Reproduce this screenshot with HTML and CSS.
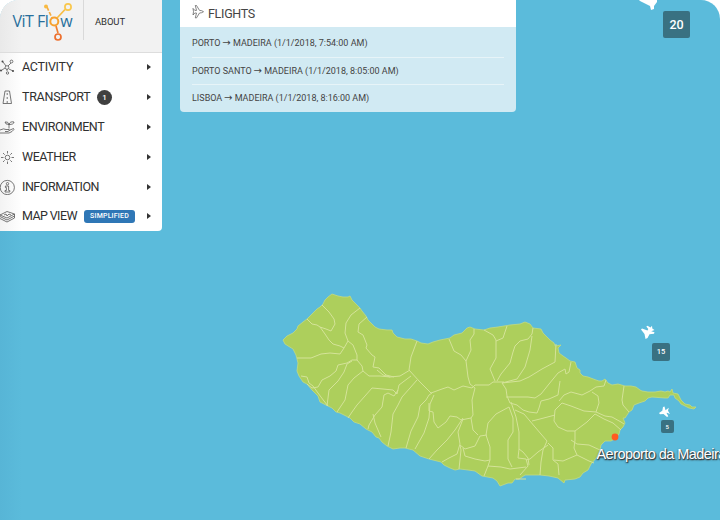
FILE: index.html
```
<!DOCTYPE html>
<html lang="en">
<head>
<meta charset="utf-8">
<title>ViT Flow</title>
<link rel="stylesheet" href="styles.css">
</head>
<body>
<main class="app">
  <svg class="map" viewBox="0 0 720 520" aria-label="Map of Madeira">
    <path class="island" d="M283 340L287 336L293 333L297 329L298 326L303 322L307 319L312 314L317 309L320 307L323 304L325 300L328 297L332 294L338 296L343 297L348 297L350 296L352 300L357 305L360 308L362 311L366 316L368 320L371 323L375 327L379 329L387 330L392 330L393 333L397 337L401 338L405 339L411 339L417 341L421 343L428 344L433 342L440 340L450 338L454 335L462 333L467 328L470 327L475 329L484 330L490 328L498 327L510 325L520 324L525 322L530 324L533 328L541 329L543 333L546 336L550 340L554 343L555 346L561 345L558 348L559 353L563 356L566 358L570 361L575 362L577 368L580 370L580 373L583 376L588 377L596 380L599 381L602 381L605 379L608 383L612 385L618 384L625 386L631 386L636 387L640 390L642 391L648 392L655 392L661 391L665 392L668 391L670 392L672 389L673 393L678 394L681 400L685 404L690 405L692 407L696 407L694 409L689 408L685 406L681 404L679 401L675 398L674 395L670 395L668 398L665 398L652 397L648 398L645 401L639 403L634 405L632 410L629 412L625 418L623 418L625 423L623 427L620 430L619 434L616 438L611 441L605 441L601 445L600 450L597 457L591 464L588 470L583 473L580 477L575 479L565 480L564 483L558 478L549 476L540 475L525 475L519 479L515 479L512 483L508 483L500 486L497 481L493 478L482 476L475 471L468 470L460 469L455 470L450 468L444 465L441 462L429 459L420 456L413 450L405 448L400 448L393 449L387 446L382 442L379 438L376 437L372 432L366 429L360 424L354 422L350 418L340 413L336 412L332 408L328 406L320 402L318 396L315 393L312 390L307 384L303 382L299 376L297 371L298 363L296 355L293 349L285 344Z"/>
    <g class="borders">
      <path d="M322 305L329 312L334 319L335 324L331 331L326 329L320 327L317 325L312 324L307 319M320 327L325 334L329 340L333 344L340 346L344 348L348 341M297 358L311 358L321 354L330 353L340 354L344 348M360 308L351 315L346 323L345 333L348 341L353 345L357 355L357 360L352 360L347 363L338 365L336 371L330 376L322 380L318 387L312 388L307 384"/>
      <path d="M367 317L359 324L358 332L363 335L367 345L366 348L372 355L375 357L374 362L373 367L379 368L386 375L394 377M357 360L362 366L363 371L354 378L348 385L345 400L337 412M352 361L347 364L344 372L338 381L329 390L327 406M363 371L369 376L380 376L390 377L400 376L410 370"/>
      <path d="M301 376L307 377L309 383L313 386L318 393L324 401L328 406M348 418L352 412L357 405L365 396L372 388L383 389L393 390L397 394L399 385L411 376M368 429L369 425L375 415L382 407L384 395L388 393L394 396L398 390M373 414L375 423L381 437M388 446L391 432L393 414L398 405L402 397L410 388L417 380M406 448L411 431L418 417L420 406L426 400L429 395L432 393M377 370L383 375L390 377"/>
      <path d="M417 341L411 357L409 370L420 382L431 393L442 389L448 387L454 390L463 386L472 388L475 385L489 385L493 382L504 382M415 449L424 433L429 418L430 404L434 395"/>
      <path d="M449 339L454 351L461 355L466 361L468 377L470 384L475 388L472 400L473 415L471 418M474 329L474 334L470 340L471 350L466 361M484 330L493 335L496 340L496 358L490 369L495 381M507 326L503 338L496 341M497 381L501 374L510 363L513 352L515 346L520 341L528 339L532 334L533 328M532 336L530 350L525 367L517 379L502 383M556 344L555 362L542 369L529 377L520 381L502 383M429 403L429 411L433 412L434 422L438 428L446 422L450 416L457 417L461 420L471 418M429 459L437 450L447 440L455 430L463 418M442 462L449 458L457 454L460 444L458 432L463 419M459 469L461 450L460 445L465 449L475 446L480 436L487 435M471 418L473 430L478 435"/>
      <path d="M463 448L465 456L475 459L485 461L490 460L490 447L486 435L488 423L496 414L509 407L513 418L513 432L508 440L508 459L512 467M490 460L488 466L484 476M488 466L501 467L510 469L518 468L526 467M511 402L516 417L519 432L519 449L518 458L526 459L528 466L520 475M510 403L507 396L506 389L502 383M560 381L559 388L558 395L549 399L541 401L539 408L537 413L529 412L523 410L517 405L510 403M532 421L540 419L555 415"/>
      <path d="M506 397L521 397L528 397L535 398L541 394L549 384L558 373L565 369L566 374L569 372L571 362M559 401L564 395L571 392L582 395L590 391L596 387L604 386L606 380M592 392L598 396L599 403L596 412L584 411L571 406L562 403L555 410L554 421L558 427L567 431L575 431L587 422L595 414L604 419L613 423L621 430M515 410L524 414L535 427L547 441L543 450L541 462L540 475M548 445L538 452L530 459L526 460M548 443L553 448L553 460L558 464L559 475M554 460L563 461L577 455L589 461L594 463M624 386L622 400L623 405L629 412M596 412L605 416L612 417L621 422L624 424M571 440L577 444L589 445L600 450M575 431L575 440L574 448L577 455M519 449L523 452L528 458L529 465M516 479H526"/>
    </g>
    <g class="planes">
      <path d="M645.5 339L644.5 334L641 329.5L642 328.5L647.5 330.5L648.3 329L646.3 326.5L647.5 325.7L650.5 327.5L652 325.8L652.3 328.5L654.5 330L651.2 331.2L654.5 332.3L654 333.8L649.5 334.2L647.5 338Z"/>
      <path d="M659 413L662.3 410.7L663 407L664.5 406.5L665.5 410.2L668.8 407.8L668 410.8L670 414L667 412.8L666.5 413L668.3 416.3L667 417L663.5 414L660 414.3Z"/>
      <path d="M638-1L640 1L646 4L650 6L651 10L654 9V6L657 2V-1Z"/>
    </g>
    <circle class="airport" cx="615" cy="437" r="3.4"/>
  </svg>
  <span class="count count-large">20</span>
  <span class="count count-medium">15</span>
  <span class="count count-small">5</span>
  <span class="airport-label">Aeroporto da Madeira</span>

  <div class="panels">
    <aside class="sidebar">
      <header class="brand">
        <div class="logo">
          <span class="logo-text">ViT Fl<i></i>w</span>
          <svg class="logo-mark" viewBox="0 0 30 42">
            <g fill="none" stroke-width="1.7">
              <path stroke="#f8bd42" d="M23 9.5L15 18"/><path stroke="#f6ad42" stroke-dasharray="4 1.5" d="M5 7L10 18"/><path stroke="#f07e2f" d="M14 26L16 33"/>
              <circle cx="26" cy="7" r="3.1" stroke="#f9c74c"/><circle cx="12.3" cy="21.5" r="4" stroke="#f6a02e" stroke-width="2"/><circle cx="16" cy="37" r="3" stroke="#ed702e"/>
            </g><circle cx="4" cy="6.5" r="2" fill="#f8ba42"/>
          </svg>
        </div>
        <a class="about">ABOUT</a>
      </header>
      <nav class="menu">
        <div class="item"><svg class="icon" viewBox="0 0 16 16"><circle cx="7" cy="8.5" r="1.8"/><circle cx="11.5" cy="2.5" r="1.4"/><circle cx="7.5" cy="14" r="1.2"/><path d="M8 7L11 4M5 9L2 11M6 7L3 3M9 10L13 12M7 10V12"/><g class="solid"><circle cx="2.5" cy="2.5" r="1"/><circle cx="1" cy="11.5" r="1"/><circle cx="13" cy="12" r="1"/></g></svg><span class="name activity">ACTIVITY</span><i class="caret"></i></div>
        <div class="item"><svg class="icon" viewBox="0 0 16 16"><path d="M5 2L3 14.5H11.5L9.5 2ZM7.2 4V6M7.2 8V10M7.2 12V14"/></svg><span class="name transport">TRANSPORT</span><b class="badge">1</b><i class="caret"></i></div>
        <div class="item"><svg class="icon" viewBox="0 0 16 16"><path d="M9 9.5V5M9 5.5Q5 5.5 5 3Q8 2 9 5.5Q10 2 14 3Q14 5.5 9 5.5M0 11Q4 9 6 10.5H9Q10 11.5 8 12.5H5M9 11.5L13.5 9.5Q15 10 12 12.5L9 14H0"/></svg><span class="name environment">ENVIRONMENT</span><i class="caret"></i></div>
        <div class="item"><svg class="icon" viewBox="0 0 16 16"><circle cx="7.5" cy="8.5" r="2.3"/><path d="M7.5 2V4.5M7.5 12.5V15M1 8.5H3.5M11.5 8.5H14M3 4L4.7 5.7M10.3 11.3L12 13M3 13L4.7 11.3M10.3 5.7L12 4"/></svg><span class="name weather">WEATHER</span><i class="caret"></i></div>
        <div class="item"><svg class="icon" viewBox="0 0 16 16"><circle cx="7.3" cy="8.5" r="7.1"/><circle cx="7.5" cy="4.7" r="1.2"/><path d="M5.4 7H8.6V11.5H9.8V13H5V11.5H6.4V8.5H5.4Z"/></svg><span class="name information">INFORMATION</span><i class="caret"></i></div>
        <div class="item"><svg class="icon" viewBox="0 0 16 16"><path d="M0 7L7 3.5L14.5 6L7 10ZM0 8.5L7 12L14.5 8M0 10.5L7 14L14.5 10M14.5 6V10M4 7L6 6L7 8L9 6L11 7"/></svg><span class="name mapview">MAP VIEW</span><b class="mode">SIMPLIFIED</b><i class="caret"></i></div>
      </nav>
    </aside>
    <section class="flights">
      <h1 class="title"><svg class="plane-icon" viewBox="0 0 12 14"><path d="M11.5 6.7Q10 5.4 7.5 5.4L4.5 .5H3.3L4.5 5.4H2.8L1 3.4L1.5 6.7L1 10L2.8 8H4.5L3.3 12.9H4.5L7.5 8Q10 8 11.5 6.7Z"/></svg><span class="heading">FLIGHTS</span></h1>
      <ul class="list">
        <li>PORTO <span class="arrow">→</span> MADEIRA (1/1/2018, 7:54:00 AM)</li>
        <li>PORTO SANTO <span class="arrow">→</span> MADEIRA (1/1/2018, 8:05:00 AM)</li>
        <li>LISBOA <span class="arrow">→</span> MADEIRA (1/1/2018, 8:16:00 AM)</li>
      </ul>
    </section>
  </div>
</main>
</body>
</html>
```
FILE: styles.css
```
* { box-sizing: border-box; }
body { margin: 0; background: #fff; font-family: Roboto, "Liberation Sans", sans-serif; color: #303030; }
.app { position: relative; width: 720px; height: 520px; overflow: hidden; border-radius: 19px 19px 0 0; background: linear-gradient(90deg, #57b5d6 0, #5bbbdb 22px); }
.map { position: absolute; inset: 0; width: 720px; height: 520px; }
.island { fill: #adcf5c; stroke: #c3da80; stroke-width: .8; }
.borders { fill: none; stroke: #d4e398; stroke-width: 1; stroke-linejoin: round; }
.planes { fill: #fff; }
.airport { fill: #ff5b20; }
.panels { position: relative; display: flex; align-items: flex-start; gap: 18.5px; }
.sidebar { width: 161.5px; height: 231px; background: linear-gradient(90deg, #f3f3f3 0, #fff 22px); border-radius: 0 0 4px 0; overflow: hidden; }
.brand { display: flex; height: 53px; background: linear-gradient(90deg, #e9e9e9 0, #f2f2f2 22px); border-bottom: 1px solid #ddd; }
.logo { position: relative; width: 84px; height: 40px; border-right: 1px solid #d9d9d9; padding: 11.5px 0 0 12.5px; }
.logo-text { display: flex; white-space: pre; font: 500 16px/19px "Open Sans", sans-serif; color: #286f9c; letter-spacing: -.5px; }
.logo-text i { width: 12px; }
.logo-mark { position: absolute; left: 42px; top: 0; width: 30px; height: 42px; }
.about { font-size: 9.5px; line-height: 12px; padding: 15.5px 0 0 11px; letter-spacing: -.1px; }
.menu { display: grid; grid-auto-rows: 29.8px; margin-top: -.5px; }
.item { display: flex; align-items: center; }
.icon { width: 16px; height: 16px; flex: none; fill: none; stroke: #555; stroke-width: .8; }
.solid { fill: #444; stroke: none; }
.name { font-size: 12.5px; line-height: 16px; margin-left: 6px; white-space: nowrap; }
.activity { width: 52px; letter-spacing: -.25px; }
.transport { width: 68.5px; letter-spacing: -.27px; }
.environment { letter-spacing: -.42px; }
.weather { letter-spacing: -.42px; }
.information { letter-spacing: -.48px; }
.mapview { width: 55px; letter-spacing: -.6px; }
.caret { margin-left: auto; margin-right: 10.5px; border-left: 4px solid #333; border-top: 3px solid transparent; border-bottom: 3px solid transparent; }
.badge { width: 15px; height: 15px; margin-left: 6.5px; border-radius: 50%; background: #404040; color: #fff; font-size: 8px; line-height: 15px; font-weight: 500; text-align: center; }
.mode { width: 51px; height: 13px; margin-left: 7px; border-radius: 3px; background: #2f77b6; color: #fff; font-size: 7px; line-height: 13px; font-weight: 500; letter-spacing: .2px; text-align: center; }
.flights { width: 335.5px; height: 112px; background: #d1eaf3; border-radius: 0 0 4px 4px; overflow: hidden; }
.title { display: flex; height: 26.5px; margin: 0; padding: 5px 12px 0; background: #fff; font-size: 12.5px; line-height: 17px; font-weight: 400; color: #444; }
.heading { letter-spacing: -.3px; }
.plane-icon { width: 12px; height: 14px; margin-right: 4px; fill: none; stroke: #555; stroke-width: .7; }
.list { list-style: none; margin: 0; padding: 3.5px 12px; }
.list li { height: 27.5px; border-bottom: 1px solid #e7f4f8; font-size: 9px; line-height: 27px; color: #444; white-space: nowrap; }
.list li:last-child { border: 0; }
.arrow { display: inline-block; width: 8px; font: 10px/10px "DejaVu Sans", sans-serif; text-indent: -.5px; }
.count { position: absolute; display: grid; place-items: center; border-radius: 2px; background: #397182; color: #fff; font-weight: 500; }
.count-large { left: 663px; top: 10.5px; width: 27px; height: 27px; font-size: 12.5px; }
.count-medium { left: 652px; top: 342.5px; width: 18px; height: 18px; font-size: 7.5px; }
.count-small { left: 660.5px; top: 419.5px; width: 13.5px; height: 13.5px; font-size: 6px; }
.airport-label { position: absolute; left: 596.5px; top: 446px; white-space: nowrap; color: #fff; font: 14.5px/16px "Liberation Sans", sans-serif; letter-spacing: -.55px; text-shadow: 1px 1px 1px #333, 0 1px 2px #333; }
```
